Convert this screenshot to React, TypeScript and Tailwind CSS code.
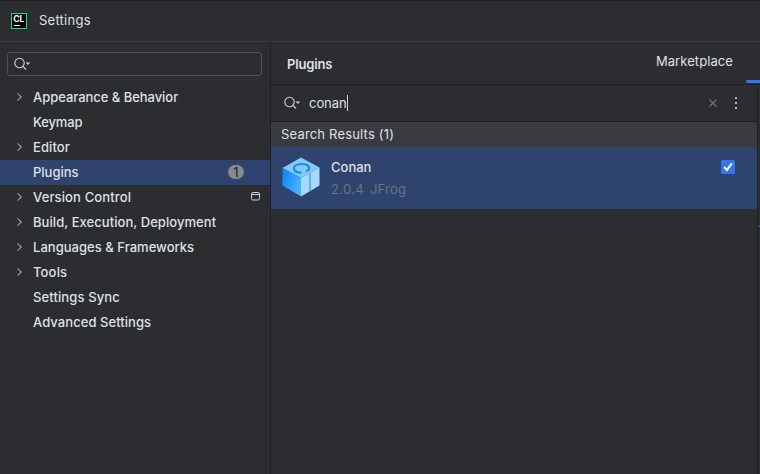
type Item = { label: string; arrow?: boolean; tracking: string; badge?: string; project?: boolean };

const items: Item[] = [
  { label: "Appearance & Behavior", arrow: true, tracking: "tracking-[-0.04px]" },
  { label: "Keymap", tracking: "tracking-[-0.15px]" },
  { label: "Editor", arrow: true, tracking: "tracking-[0.1px]" },
  { label: "Plugins", tracking: "tracking-[0px]", badge: "1" },
  { label: "Version Control", arrow: true, tracking: "tracking-[0.13px]", project: true },
  { label: "Build, Execution, Deployment", arrow: true, tracking: "tracking-[0.06px]" },
  { label: "Languages & Frameworks", arrow: true, tracking: "tracking-[0.03px]" },
  { label: "Tools", arrow: true, tracking: "tracking-[0.15px]" },
  { label: "Settings Sync", tracking: "tracking-[0.11px]" },
  { label: "Advanced Settings", tracking: "tracking-[0.06px]" },
];

function SearchIcon() {
  return (
    <svg width="18" height="14" viewBox="0 0 18 14" fill="none" className="shrink-0">
      <circle cx="5.5" cy="6" r="4.7" stroke="#ced0d6" strokeWidth="1.1" />
      <path d="M8.9 9.4L12 12.5" stroke="#ced0d6" strokeWidth="1.2" />
      <path d="M11.5 5.5H16.3L13.9 8Z" fill="#ced0d6" />
    </svg>
  );
}

function ConanIcon() {
  return (
    <svg width="38" height="40" viewBox="0 0 38 40" fill="none" className="shrink-0">
      <defs>
        <linearGradient id="side" x1="0" y1="16" x2="19" y2="24" gradientUnits="userSpaceOnUse">
          <stop stopColor="#0a84ff" />
          <stop offset="1" stopColor="#47b0ff" />
        </linearGradient>
      </defs>
      <path d="M19 0.5L37.5 10.5L19 21L0.5 11Z" fill="#85c8fa" />
      <path d="M0.5 11L19 21V39.5L0.5 28.5Z" fill="url(#side)" />
      <path d="M19 21L37.5 10.5V28.5L19 39.5Z" fill="#a6d9ff" />
      <path d="M28 16V34" stroke="#198cf5" strokeWidth="1" />
      <path d="M19.5 15.8C15 15.6 12 13.8 12 11.4C12 8.6 15.6 7 20 7C24.4 7 27.4 8.8 27.2 11.4C27.1 12.6 25.8 13.6 24 14" stroke="#198cf5" strokeWidth="2.2" />
    </svg>
  );
}

export default function App() {
  return (
    <div className="flex h-[474px] w-[760px] flex-col overflow-hidden border-t border-[#1e1f22] bg-[#2b2d30] font-['Inter',sans-serif] text-[13px] leading-4 text-[#dfe1e5]">
      <header className="flex h-[41px] shrink-0 items-center border-b border-[#393b40] pl-[11px]">
        <svg width="16" height="16" viewBox="0 0 16 16" className="shrink-0">
          <rect x="0.5" y="0.5" width="15" height="15" fill="#000" stroke="#21d789" />
          <text x="2.2" y="9.2" fill="#fff" fontFamily="Inter, sans-serif" fontSize="8.6" fontWeight="700" textLength="11.2">CL</text>
          <rect x="3" y="12" width="6" height="1" fill="#fff" />
        </svg>
        <span className="ml-3 pb-[2px] tracking-[0.25px]">Settings</span>
      </header>

      <div className="flex min-h-0 flex-1">
        <aside className="w-[270px] shrink-0 pt-[10px]">
          <div className="ml-[7px] flex h-6 w-[255px] items-center rounded-[3px] border border-[#4e5157] pl-[6px]">
            <SearchIcon />
          </div>
          <nav className="mt-[9px]">
            {items.map((it) => (
              <div key={it.label} className={"flex h-[25px] items-center pb-[2px] " + (it.badge ? "bg-[#2e436e]" : "")}>
                <span className="flex w-[33px] shrink-0 pl-4">
                  {it.arrow && (
                    <svg width="7" height="10" viewBox="0 0 7 10" fill="none">
                      <path d="M1.5 1.3L5.3 5L1.5 8.7" stroke="#9da0a8" strokeWidth="1.1" />
                    </svg>
                  )}
                </span>
                <span className={"whitespace-nowrap font-medium " + it.tracking}>{it.label}</span>
                {it.badge && (
                  <span className="ml-auto mr-[26px] flex h-[14px] w-4 items-center justify-center rounded-full bg-[#868a91] text-[13px] text-[#1e1f22]">
                    {it.badge}
                  </span>
                )}
                {it.project && (
                  <svg width="10" height="9" viewBox="0 0 10 9" fill="none" className="ml-auto mr-[9px]">
                    <rect x="0.5" y="0.5" width="8" height="7.5" rx="1.5" stroke="#ced0d6" />
                    <path d="M1 2.5H8.5" stroke="#ced0d6" />
                  </svg>
                )}
              </div>
            ))}
          </nav>
        </aside>

        <main className="flex min-w-0 flex-1 flex-col border-l border-[#1e1f22]">
          <div className="flex h-[43px] shrink-0 justify-between border-b border-[#1e1f22] pl-4">
            <span className="pt-[14px] font-semibold tracking-[-0.15px]">Plugins</span>
            <div className="flex">
              <span className="pr-[13px] pt-[11px] tracking-[0.08px]">Marketplace</span>
              <span className="mt-[38px] h-[3px] w-[14px] rounded-l-sm bg-[#3574f0]" />
            </div>
          </div>
          <div className="flex min-h-0 flex-1">
            <section className="w-[486px] shrink-0">
              <div className="flex h-[37px] items-center border-b border-[#1e1f22] pl-[13px]">
                <SearchIcon />
                <span className="ml-[7px] w-[38px] tracking-[-0.05px]">conan</span>
                <span className="h-4 w-px bg-[#ced0d6]" />
                <svg width="8" height="8" viewBox="0 0 8 8" className="ml-auto">
                  <path d="M0.5 0.5L7.5 7.5M7.5 0.5L0.5 7.5" stroke="#6f737a" strokeWidth="1.2" />
                </svg>
                <svg width="2" height="12" viewBox="0 0 2 12" className="ml-[18px] mr-[20px]" fill="#b4b8bf">
                  <path d="M0 0H2V2H0ZM0 5H2V7H0ZM0 10H2V12H0Z" />
                </svg>
              </div>
              <div className="flex h-[25px] items-center bg-[#393b40] pb-[2px] pl-[10px] tracking-[0.18px]">Search Results (1)</div>
              <div className="flex h-[62px] bg-[#2e436e] pl-[11px] pt-[10px]">
                <ConanIcon />
                <div className="ml-[11px] flex flex-col pt-[2px]">
                  <span className="font-medium">Conan</span>
                  <span className="mt-[6px] flex text-[#6f737a]">
                    <span className="w-[39px] tracking-[0.3px]">2.0.4</span>
                    <span className="tracking-[0.2px]">JFrog</span>
                  </span>
                </div>
                <svg width="14" height="14" viewBox="0 0 14 14" fill="none" className="ml-auto mr-[22px] mt-[3px]">
                  <rect width="14" height="14" rx="1.5" fill="#3574f0" />
                  <path d="M3.2 7L5.9 10.2L10.8 3.3" stroke="#fff" strokeWidth="2" />
                </svg>
              </div>
            </section>
            <aside className="flex-1 border-l border-[#1e1f22] pt-[141px]">
              <div className="ml-auto h-[2px] w-[2px] border-b border-[#1e1f22] bg-[#3574f0]" />
            </aside>
          </div>
        </main>
      </div>
    </div>
  );
}
